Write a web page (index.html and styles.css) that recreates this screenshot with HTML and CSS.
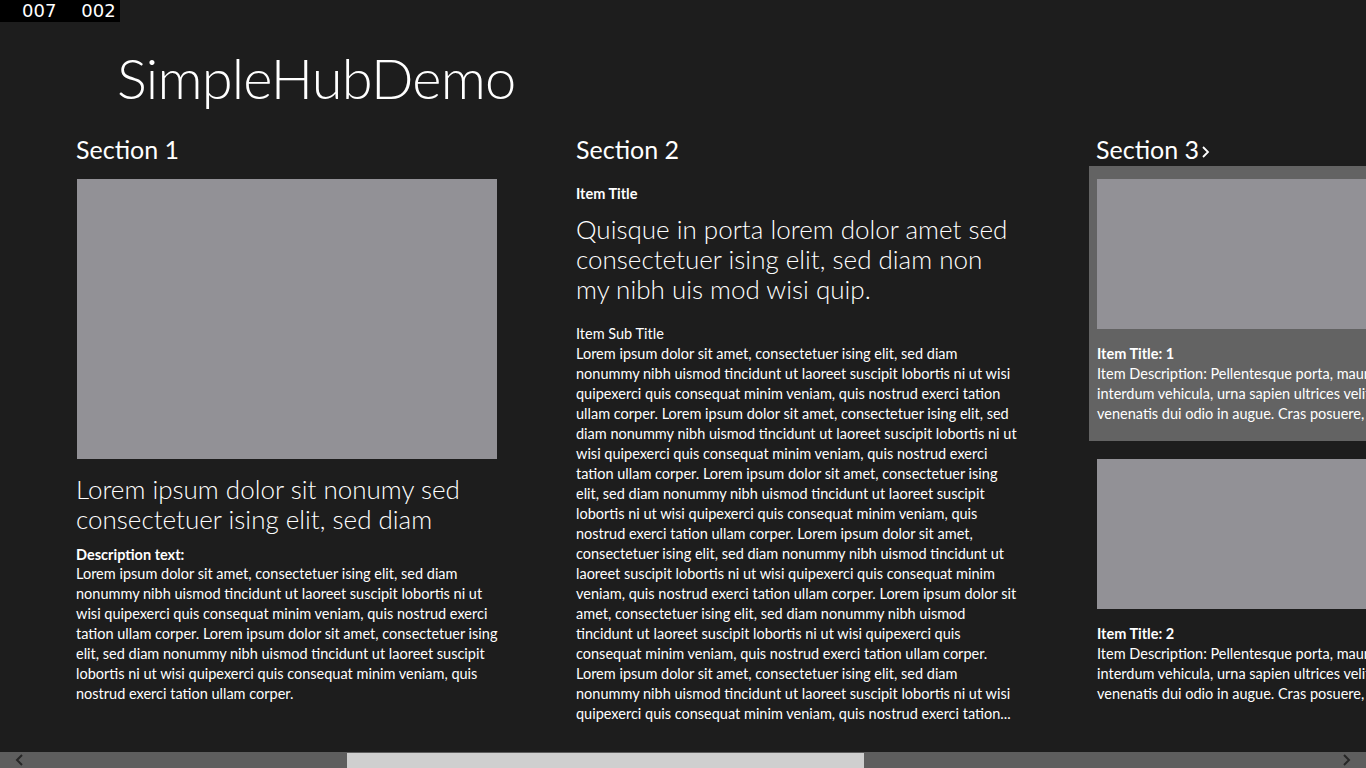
FILE: index.html
```html
<!DOCTYPE html>
<html lang="en">
<head>
<meta charset="utf-8">
<title>SimpleHubDemo</title>
<link rel="stylesheet" href="styles.css">
</head>
<body>
<div class="counter"><span>007</span><span>002</span></div>
<div class="page">
  <header class="page-header">
    <h1 class="app-title">SimpleHubDemo</h1>
  </header>
  <main class="hub">
    <section class="hub-section s1">
      <h2 class="section-header">Section 1</h2>
      <div class="placeholder big"></div>
      <p class="subheader s1-head"><span>Lorem ipsum dolor sit nonumy sed</span><span>consectetuer ising elit, sed diam</span></p>
      <p class="desc-title">Description text:</p>
      <p class="body-text">
        <span>Lorem ipsum dolor sit amet, consectetuer ising elit, sed diam</span>
        <span>nonummy nibh uismod tincidunt ut laoreet suscipit lobortis ni ut</span>
        <span>wisi quipexerci quis consequat minim veniam, quis nostrud exerci</span>
        <span>tation ullam corper. Lorem ipsum dolor sit amet, consectetuer ising</span>
        <span>elit, sed diam nonummy nibh uismod tincidunt ut laoreet suscipit</span>
        <span>lobortis ni ut wisi quipexerci quis consequat minim veniam, quis</span>
        <span>nostrud exerci tation ullam corper.</span>
      </p>
    </section>
    <section class="hub-section s2">
      <h2 class="section-header">Section 2</h2>
      <p class="item-title">Item Title</p>
      <p class="subheader s2-head"><span>Quisque in porta lorem dolor amet sed</span><span>consectetuer ising elit, sed diam non</span><span>my nibh uis mod wisi quip.</span></p>
      <p class="sub-title">Item Sub Title</p>
      <p class="body-text">
        <span>Lorem ipsum dolor sit amet, consectetuer ising elit, sed diam</span>
        <span>nonummy nibh uismod tincidunt ut laoreet suscipit lobortis ni ut wisi</span>
        <span>quipexerci quis consequat minim veniam, quis nostrud exerci tation</span>
        <span>ullam corper. Lorem ipsum dolor sit amet, consectetuer ising elit, sed</span>
        <span>diam nonummy nibh uismod tincidunt ut laoreet suscipit lobortis ni ut</span>
        <span>wisi quipexerci quis consequat minim veniam, quis nostrud exerci</span>
        <span>tation ullam corper. Lorem ipsum dolor sit amet, consectetuer ising</span>
        <span>elit, sed diam nonummy nibh uismod tincidunt ut laoreet suscipit</span>
        <span>lobortis ni ut wisi quipexerci quis consequat minim veniam, quis</span>
        <span>nostrud exerci tation ullam corper. Lorem ipsum dolor sit amet,</span>
        <span>consectetuer ising elit, sed diam nonummy nibh uismod tincidunt ut</span>
        <span>laoreet suscipit lobortis ni ut wisi quipexerci quis consequat minim</span>
        <span>veniam, quis nostrud exerci tation ullam corper. Lorem ipsum dolor sit</span>
        <span>amet, consectetuer ising elit, sed diam nonummy nibh uismod</span>
        <span>tincidunt ut laoreet suscipit lobortis ni ut wisi quipexerci quis</span>
        <span>consequat minim veniam, quis nostrud exerci tation ullam corper.</span>
        <span>Lorem ipsum dolor sit amet, consectetuer ising elit, sed diam</span>
        <span>nonummy nibh uismod tincidunt ut laoreet suscipit lobortis ni ut wisi</span>
        <span>quipexerci quis consequat minim veniam, quis nostrud exerci tation...</span>
      </p>
    </section>
    <section class="hub-section s3">
      <h2 class="section-header">Section 3<svg class="chev" width="12" height="16" viewBox="0 0 12 16"><polyline points="3,4 8,9 3,14" fill="none" stroke="#ffffff" stroke-width="1.8"/></svg></h2>
      <div class="items">
        <div class="item selected">
          <div class="placeholder thumb"></div>
          <p class="item-title">Item Title: 1</p>
          <p class="body-text">
            <span>Item Description: Pellentesque porta, mauris quis</span>
            <span>interdum vehicula, urna sapien ultrices velit, nec</span>
            <span>venenatis dui odio in augue. Cras posuere, enim a</span>
          </p>
        </div>
        <div class="item">
          <div class="placeholder thumb"></div>
          <p class="item-title">Item Title: 2</p>
          <p class="body-text">
            <span>Item Description: Pellentesque porta, mauris quis</span>
            <span>interdum vehicula, urna sapien ultrices velit, nec</span>
            <span>venenatis dui odio in augue. Cras posuere, enim a</span>
          </p>
        </div>
      </div>
    </section>
  </main>
  <div class="scrollbar">
    <span class="arrow left"><svg width="10" height="12" viewBox="0 0 10 12"><polyline points="7,1 2,6 7,11" fill="none" stroke="#262626" stroke-width="2"/></svg></span>
    <div class="track"><div class="thumb-bar"></div></div>
    <span class="arrow right"><svg width="10" height="12" viewBox="0 0 10 12"><polyline points="3,1 8,6 3,11" fill="none" stroke="#262626" stroke-width="2"/></svg></span>
  </div>
</div>
</body>
</html>
```
FILE: styles.css
```css
* { box-sizing: border-box; }
html, body {
  margin: 0;
  padding: 0;
  width: 1366px;
  height: 768px;
  overflow: hidden;
  background: #1d1d1d;
  color: #ffffff;
  font-family: "Lato", "Open Sans", "Liberation Sans", sans-serif;
}
p, h1, h2 { margin: 0; font-weight: normal; }

.counter {
  position: absolute;
  left: 0;
  top: 0;
  width: 120px;
  height: 22px;
  background: #000;
  display: flex;
  font-family: "DejaVu Sans", sans-serif;
  font-size: 18px;
  line-height: 22px;
  color: #fff;
}
.counter span:first-child { margin-left: 22px; }
.counter span:last-child { margin-left: 25px; }

.page {
  display: flex;
  flex-direction: column;
  height: 768px;
}

.page-header { padding: 50px 0 0 117px; height: 134px; }
.app-title {
  font-weight: 300;
  font-size: 56px;
  line-height: 56px;
  letter-spacing: -0.8px;
}

.hub {
  flex: 1;
  display: flex;
  overflow: hidden;
  padding-left: 76px;
}
.hub-section { flex: none; margin-right: 80px; }
.s1 { width: 420px; }
.s2 { width: 440px; }
.s3 { width: 320px; margin-right: 0; }

.section-header {
  font-size: 25px;
  line-height: 30px;
  font-weight: 400;
  white-space: nowrap;
  display: flex;
  align-items: center;
}
.chev { margin-left: 1px; margin-top: 4px; }

.placeholder { background: #929196; }
.big { width: 420px; height: 280px; margin-top: 15px; margin-left: 1px; }

.subheader {
  font-weight: 300;
  font-size: 26px;
  line-height: 30px;
}
.subheader span, .body-text span { display: block; white-space: nowrap; }
.s1-head { margin-top: 15px; }

.desc-title {
  font-weight: 700;
  font-size: 14.5px;
  line-height: 19px;
  margin-top: 11px;
}
.body-text {
  font-size: 14.5px;
  line-height: 20px;
}

.item-title {
  font-weight: 700;
  font-size: 14.5px;
  line-height: 20px;
}
.s2 .item-title { margin-top: 20px; }
.s2-head { margin-top: 10px; }
.sub-title {
  font-size: 14.5px;
  line-height: 20px;
  margin-top: 20px;
}

.items { margin-left: -7px; margin-top: 2px; }
.item { padding: 13px 0 17px 8px; margin-bottom: 5px; }
.item.selected { background: #636363; }
.thumb { width: 320px; height: 150px; }
.item .item-title { margin-top: 15px; }

.scrollbar {
  height: 16px;
  flex: none;
  background: #5e5e5e;
  display: flex;
  align-items: stretch;
}
.arrow { width: 40px; display: flex; align-items: center; justify-content: center; }
.track { flex: 1; display: flex; }
.thumb-bar { margin-left: 307px; width: 517px; background: #cfcfcf; margin-top: 1px; }
```
